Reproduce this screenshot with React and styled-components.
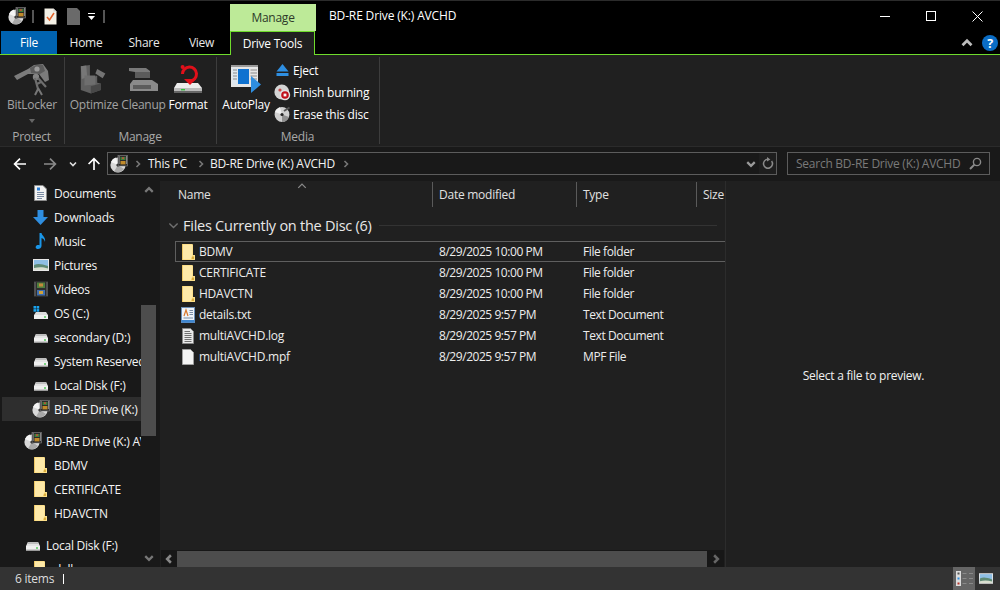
import React from "react";
import styled, { createGlobalStyle } from "styled-components";

const Global = createGlobalStyle`
  html, body { margin: 0; padding: 0; background: #000; }
  * { box-sizing: border-box; }
  body { font-family: "Open Sans", "Noto Sans", "Liberation Sans", sans-serif; font-size: 12px; color: #fff; }
`;

const Window = styled.div`
  width: 1000px; height: 590px; display: flex; flex-direction: column; overflow: hidden;
  background: #000; border-top: 1px solid #2b2b2b;
  letter-spacing: -0.25px;
`;
const TitleBar = styled.div`
  height: 30px; display: flex; align-items: flex-start; flex: none;
`;
const QuickAccess = styled.div`
  width: 230px; height: 30px; display: flex; align-items: center; padding: 0 0 0 8px; flex: none;
`;
const QuickSep = styled.span`
  width: 2px; height: 13px; background: #555; flex: none;
  margin: ${p => p.$margin};
`;
const QuickItem = styled.span`
  display: flex; flex: none; margin-left: ${p => p.$m || 0}px;
`;
const ContextTab = styled.div`
  width: 86px; height: 27px; margin-top: 3px; background: #bdea98; color: #2e3a2a;
  display: flex; align-items: center; justify-content: center; flex: none;
`;
const Title = styled.div`
  margin-left: 13px; line-height: 30px; flex: 1; letter-spacing: -0.15px;
`;
const WinButton = styled.div`
  width: 46px; height: 30px; display: flex; align-items: center; justify-content: center; flex: none;
`;
const TabRow = styled.div`
  height: 24px; display: flex; flex: none; border-bottom: 1px solid #6fdc2c; padding-left: 1px; align-items: stretch;
`;
const FileTab = styled.div`
  width: 56px; height: 23px; background: #0063b1; display: flex; align-items: center; justify-content: center; color: #fff; flex: none;
`;
const Tab = styled.div`
  width: ${p => p.$w}px; display: flex; align-items: center; justify-content: center; color: #e8e8e8; flex: none;
`;
const ActiveTab = styled.div`
  width: 85px; height: 24px; background: #202020; color: #fff; border: 1px solid #6fdc2c; border-bottom: 0;
  display: flex; align-items: center; justify-content: center; flex: none;
`;
const TabFiller = styled.div`flex: 1;`;
const TabTools = styled.div`
  display: flex; align-items: center; gap: 9px; padding-right: 2px; height: 23px;
`;
const Ribbon = styled.div`
  height: 92px; flex: none; background: #202020; display: flex; border-bottom: 1px solid #2b2b2b; padding-top: 2px;
`;
const Group = styled.div`
  width: ${p => p.$w}px; flex: none; display: flex; flex-direction: column; height: 87px;
  border-right: 1px solid #3d3d3d;
`;
const GroupBody = styled.div`
  height: 72px; display: flex; padding-left: ${p => p.$pad || 0}px; gap: ${p => p.$gap || 0}px;
`;
const GroupLabel = styled.div`
  height: 15px; margin-top: 1px; text-align: center; color: #a9a9a9; line-height: 15px; margin-right: 1px;
`;
const BigButton = styled.div`
  width: ${p => p.$w}px; display: flex; flex-direction: column; align-items: center; flex: none;
  color: ${p => p.$off ? "#a3a3a3" : "#fff"};
`;
const BigIcon = styled.div`
  height: 36px; margin-top: 4px; display: flex; align-items: center; justify-content: center;
`;
const BigLabel = styled.div`
  line-height: 16px; white-space: nowrap;
`;
const Drop = styled.div`
  width: 0; height: 0; border: 3.5px solid transparent; border-top: 4px solid #666; border-bottom: 0; margin-top: 6px;
`;
const SmallStack = styled.div`
  display: flex; flex-direction: column; padding-top: 2px; margin-left: 3px;
`;
const SmallButton = styled.div`
  height: 22px; display: flex; align-items: center; gap: 2px; white-space: nowrap;
`;
const SmallIcon = styled.span`
  width: 17px; height: 17px; display: flex; align-items: center; justify-content: center; flex: none;
`;
const AddressRow = styled.div`
  height: 34px; flex: none; background: #191919; display: flex; align-items: flex-start; padding-top: 5px;
`;
const NavButtons = styled.div`
  width: 107px; height: 23px; display: flex; align-items: center; flex: none; padding-left: 13px;
`;
const NavBtn = styled.span`
  display: flex; align-items: center; justify-content: center; width: ${p => p.$w}px; flex: none;
  margin-left: ${p => p.$m || 0}px;
`;
const AddressBox = styled.div`
  width: 670px; height: 23px; border: 1px solid #5c5c5c; display: flex; align-items: center; padding-left: 2px; flex: none;
`;
const Crumb = styled.span`
  color: #f2f2f2; white-space: nowrap; margin-left: ${p => p.$m}px;
`;
const CrumbSep = styled.span`
  display: flex; margin-left: ${p => p.$m}px;
`;
const BoxTools = styled.div`
  margin-left: auto; display: flex; align-items: center; height: 100%;
`;
const BoxTool = styled.span`
  width: ${p => p.$w}px; height: 100%; display: flex; align-items: center; justify-content: center;
  background: ${p => p.$dark ? "#1e1e1e" : "transparent"};
`;
const SearchBox = styled.div`
  width: 203px; height: 23px; margin-left: 10px; border: 1px solid #5c5c5c; color: #7a7a7a;
  display: flex; align-items: center; padding: 0 7px 0 8px; justify-content: space-between; flex: none;
`;
const Body = styled.div`
  flex: 1; min-height: 0; display: flex;
`;
const NavPane = styled.div`
  width: 160px; flex: none; background: #191919; display: flex; overflow: hidden;
`;
const NavList = styled.div`
  width: 141px; flex: none; padding: 0 0 0 2px; overflow: hidden;
`;
const NavRow = styled.div`
  height: 24px; width: 139px; display: flex; align-items: center; white-space: nowrap; overflow: hidden;
  padding-left: ${p => p.$root ? 21 : 29}px; gap: 4px; flex: none;
  margin-top: ${p => p.$gap ? 8 : 0}px; color: #f4f4f4;
  background: ${p => p.$sel ? "#2e2e2e" : "transparent"};
`;
const NavIcon = styled.span`
  width: 19px; height: 19px; flex: none; display: flex; align-items: center; justify-content: center;
`;
const NavScroll = styled.div`
  width: 15px; flex: none; display: flex; flex-direction: column; align-items: center; height: 100%;
`;
const ScrollArrow = styled.span`
  height: 18px; display: flex; align-items: center; justify-content: center; flex: none; margin-top: ${p => p.$m || 0}px;
`;
const ScrollThumb = styled.div`
  width: 15px; height: 131px; margin-top: 106px; background: #4d4d4d; flex: none;
`;
const ListPane = styled.div`
  width: 565px; flex: none; background: #202020; display: flex; flex-direction: column;
`;
const ColumnHead = styled.div`
  height: 26px; flex: none; display: flex; color: #e0e0e0; padding-top: 1px; position: relative;
`;
const SortMark = styled.span`
  position: absolute; left: 137px; top: 0; display: flex;
`;
const Column = styled.div`
  width: ${p => p.$w}px; flex: none; height: 25px; display: flex; align-items: center; white-space: nowrap; overflow: hidden;
  padding-left: ${p => p.$pad}px; border-right: ${p => p.$end ? "0" : "1px solid #5a5a5a"};
`;
const GroupHead = styled.div`
  height: 34px; flex: none; display: flex; align-items: center; padding: 2px 8px 0 8px; font-size: 14.5px; color: #e8e8e8; white-space: nowrap;
`;
const GroupChevron = styled.span`
  width: 15px; display: flex; flex: none;
`;
const GroupLine = styled.span`
  flex: 1; height: 1px; background: #333; margin-left: 7px;
`;
const Rows = styled.div`
  flex: 1; min-height: 0; display: flex; flex-direction: column;
`;
const FileRow = styled.div`
  height: 21px; width: 550px; margin-left: 15px; flex: none; display: flex; align-items: center; white-space: nowrap; color: #ededed;
  border: 1px solid ${p => p.$focus ? "#5f5f5f" : "transparent"}; border-right: 0;
`;
const FileIconBox = styled.span`
  width: 16px; height: 19px; margin-left: 4px; display: flex; align-items: center; justify-content: center; flex: none;
`;
const FileName = styled.span`width: 240px; margin-left: 3px; flex: none;`;
const FileDate = styled.span`width: 144px; flex: none; letter-spacing: -0.45px;`;
const FileType = styled.span`letter-spacing: -0.4px;`;
const HScroll = styled.div`
  height: 17px; flex: none; margin-left: 1px; background: #171717; display: flex; align-items: stretch; width: 563px;
`;
const HArrow = styled.span`
  width: ${p => p.$w}px; flex: none; display: flex; align-items: center; justify-content: center;
`;
const HThumb = styled.div`
  flex: 1; background: #4d4d4d; margin-top: 1px;
`;
const Preview = styled.div`
  flex: 1; background: #202020; border-left: 1px solid #2c2c2c; display: flex; align-items: center; justify-content: center; color: #f0f0f0;
`;
const PreviewText = styled.span`margin: 3px 0 0 1px;`;
const StatusBar = styled.div`
  height: 23px; flex: none; background: #333; display: flex; align-items: center; padding-left: 15px; color: #ddd;
`;
const Caret = styled.span`
  width: 1px; height: 10px; background: #fff; margin-left: 9px;
`;
const ViewButtons = styled.div`
  margin-left: auto; display: flex; height: 100%; align-items: center; padding-right: 3px;
`;
const ViewBtn = styled.span`
  width: 22px; height: 23px; display: flex; align-items: center; justify-content: center;
  background: ${p => p.$on ? "#656565" : "transparent"};
`;
const ArrowSvg = styled.svg`
  transform: rotate(${p => p.$rot || 0}deg);
`;

/* ---------- drawings ---------- */
const Disc = ({ s = 18 }) => (
  <svg width={s} height={s} viewBox="0 0 18 18">
    <circle cx="8" cy="10" r="7.6" fill="#d8d8d8" />
    <path d="M8 10 L1 7 A7.6 7.6 0 0 1 6 2.6Z" fill="#f5f5f5" />
    <path d="M8 10 L14 14 A7.6 7.6 0 0 1 4 16.4Z" fill="#a8a8a8" />
    <circle cx="8" cy="10" r="1.6" fill="#191919" />
    <rect x="8" y="0.5" width="9.5" height="10.5" fill="#2b2b2b" stroke="#8a8a8a" strokeWidth="0.6" />
    <rect x="10.5" y="2" width="5" height="3" fill="#3f7f3a" />
    <rect x="10.5" y="6" width="5" height="3.4" fill="#c08a2a" />
    <rect x="12" y="2.4" width="2" height="1.4" fill="#d24a3a" />
    <rect x="8.7" y="1.5" width="1" height="1" fill="#ddd" /><rect x="8.7" y="3.5" width="1" height="1" fill="#ddd" />
    <rect x="8.7" y="5.5" width="1" height="1" fill="#ddd" /><rect x="8.7" y="7.5" width="1" height="1" fill="#ddd" />
    <rect x="16" y="1.5" width="1" height="1" fill="#ddd" /><rect x="16" y="3.5" width="1" height="1" fill="#ddd" />
    <rect x="16" y="5.5" width="1" height="1" fill="#ddd" /><rect x="16" y="7.5" width="1" height="1" fill="#ddd" />
  </svg>
);
const Folder = () => (
  <svg width="13" height="16" viewBox="0 0 13 16">
    <path d="M0 0 H10.5 L11 1 V11 H13 V16 H0Z" fill="#fde08b" />
    <path d="M1 1 H10 V12 L9 15 H1Z" fill="#fee9a8" />
    <path d="M10 12.5 H12 V15 H9.5Z" fill="#d9ac3c" />
    <path d="M0 0 H1 V16 H0Z" fill="#eec765" />
  </svg>
);
const Drive = ({ s = 16 }) => (
  <svg width={s} height={s} viewBox="0 0 16 16">
    <path d="M3 5 H13 L15 9 H1Z" fill="#e4e4e4" />
    <path d="M3 5 H13 L14 7 H2Z" fill="#bdbdbd" />
    <rect x="1" y="9" width="14" height="4.6" fill="#f0f0f0" />
    <rect x="1" y="12.6" width="14" height="1" fill="#9a9a9a" />
    <rect x="11" y="10.4" width="2" height="1.2" fill="#31c23c" />
  </svg>
);
const OsDrive = () => (
  <svg width="16" height="16" viewBox="0 0 16 16">
    <path d="M3 7 H13 L15 10 H1Z" fill="#dcdcdc" />
    <rect x="1" y="10" width="14" height="4" fill="#f0f0f0" />
    <rect x="11" y="11.4" width="2" height="1.2" fill="#31c23c" />
    <rect x="0.5" y="1" width="2.6" height="2.6" fill="#19a3ee" /><rect x="3.6" y="1" width="2.6" height="2.6" fill="#19a3ee" />
    <rect x="0.5" y="4.1" width="2.6" height="2.6" fill="#19a3ee" /><rect x="3.6" y="4.1" width="2.6" height="2.6" fill="#19a3ee" />
  </svg>
);
const DocIcon = () => (
  <svg width="13" height="16" viewBox="0 0 13 16">
    <path d="M.5 .5 H9 L12.5 4 V15.5 H.5Z" fill="#f2f2f2" stroke="#8c8c8c" />
    <rect x="3" y="2.5" width="3" height="3" fill="#2b7fd6" />
    <path d="M3 7.5H10M3 9.5H10M3 11.5H10M3 13.5H8" stroke="#7a8ba3" />
  </svg>
);
const Download = () => (
  <svg width="17" height="17" viewBox="0 0 17 17">
    <path d="M5.5 1 H11.5 V8 H16 L8.5 16 L1 8 H5.5Z" fill="#2f8ee0" />
  </svg>
);
const Music = () => (
  <svg width="14" height="18" viewBox="0 0 14 18">
    <path d="M5.5 1 H7.5 C8 4 12 5 11 10 C10.5 7.5 9 6.5 7.5 6 V14 C7.5 16.5 4.5 17.5 2.8 16.8 C1 16 1.5 13.5 3.5 13 C4.3 12.8 5 12.9 5.5 13.2Z" fill="#1a96e8" />
  </svg>
);
const Picture = ({ w = 16, h = 12 }) => (
  <svg width={w} height={h} viewBox="0 0 16 12">
    <rect width="16" height="12" fill="#e8e8e8" />
    <rect x="1" y="1" width="14" height="10" fill="#8fbfe4" />
    <path d="M1 6 C5 4 9 5 15 7 V11 H1Z" fill="#5f8a74" />
    <path d="M1 9 C6 8 10 8 15 9.5 V11 H1Z" fill="#d9dfd0" />
  </svg>
);
const Film = () => (
  <svg width="14" height="16" viewBox="0 0 14 16">
    <rect width="14" height="16" fill="#2e2e2e" />
    <rect x="3" y="1.5" width="8" height="5.5" fill="#4f7f3f" />
    <rect x="3" y="9" width="8" height="5.5" fill="#3f6fb0" />
    <rect x="5" y="2.5" width="4" height="3" fill="#c58a3a" />
    <rect x="5" y="10" width="4" height="3" fill="#d0a23a" />
    <path d="M1 1.5V14.5M13 1.5V14.5" stroke="#bbb" strokeDasharray="1 1" />
  </svg>
);
const TextDoc = () => (
  <svg width="14" height="16" viewBox="0 0 14 16">
    <rect x=".5" y=".5" width="13" height="15" fill="#eef3f9" stroke="#6c8fb8" />
    <rect x=".5" y="13" width="13" height="2.5" fill="#3f86cf" />
    <path d="M3 9 L5 3 L7 9" fill="none" stroke="#d9772c" strokeWidth="1.2" />
    <path d="M8.5 3.5H12M8.5 5.5H12M8.5 7.5H12M2.5 11H12" stroke="#7a8ba3" />
  </svg>
);
const LogIcon = () => (
  <svg width="12" height="16" viewBox="0 0 12 16">
    <path d="M.5 .5 H8.5 L11.5 3.5 V15.5 H.5Z" fill="#e9e9e9" stroke="#888" />
    <path d="M2.5 3.5H8M2.5 5.5H9.5M2.5 7.5H9.5M2.5 9.5H9.5M2.5 11.5H9.5M2.5 13.5H9.5" stroke="#6f6f6f" />
  </svg>
);
const BlankDoc = () => (
  <svg width="12" height="16" viewBox="0 0 12 16">
    <path d="M.5 .5 H8.5 L11.5 3.5 V15.5 H.5Z" fill="#f4f4f4" stroke="#a0a0a0" />
  </svg>
);
const Chev = ({ d = "right", c = "#8a8a8a", s = 8, w = 1.6 }) => {
  const p = { right: "M2.5 1 L5.5 4 L2.5 7", left: "M5.5 1 L2.5 4 L5.5 7", up: "M1 5.5 L4 2.5 L7 5.5", down: "M1 2.5 L4 5.5 L7 2.5" }[d];
  return <svg width={s} height={s} viewBox="0 0 8 8"><path d={p} fill="none" stroke={c} strokeWidth={w} /></svg>;
};
const Arrow = ({ c = "#fff", rot = 0 }) => (
  <ArrowSvg width="14" height="14" viewBox="0 0 14 14" $rot={rot}>
    <path d="M13 7 H2 M7 1.6 L1.6 7 L7 12.4" fill="none" stroke={c} strokeWidth="1.7" />
  </ArrowSvg>
);
const Refresh = () => (
  <svg width="12" height="13" viewBox="0 0 12 13">
    <path d="M9.6 4 A4.5 4.5 0 1 1 6 2.2" fill="none" stroke="#8a8a8a" strokeWidth="1.5" />
    <path d="M5 0 L8.4 2.4 L5 4.6Z" fill="#8a8a8a" />
  </svg>
);
const Search = () => (
  <svg width="13" height="13" viewBox="0 0 13 13">
    <circle cx="8" cy="5" r="3.6" fill="none" stroke="#8a8a8a" strokeWidth="1.4" />
    <path d="M5.4 7.6 L1 12" stroke="#8a8a8a" strokeWidth="2" />
  </svg>
);
const BitLockerIcon = () => (
  <svg width="36" height="33" viewBox="0 0 36 33">
    <path d="M0 13 L14 6 L20 2 L29 1 L34 8 L35 17 L31 19 L25 11 L14 11 L3 17Z" fill="#7c7c7c" />
    <path d="M16 5 L22 2 L29 2 L31 8 L26 11 L17 10Z" fill="#5c5c5c" />
    <circle cx="23" cy="6" r="2.6" fill="#9c9c9c" />
    <circle cx="22" cy="14" r="3.2" fill="#858585" />
    <path d="M21 15 L24 26 M24 15 L32 24 M23 21 L27 19" stroke="#6e6e6e" strokeWidth="2.2" fill="none" />
    <path d="M24 25 L28 32 M24 26 L21 32" stroke="#777" strokeWidth="2" />
  </svg>
);
const OptimizeIcon = () => (
  <svg width="30" height="33" viewBox="0 0 33 33">
    <path d="M2 2 L12 0.5 V16 L20 12 V20 L24 21 V28 L13 32 L2 28Z" fill="#5f5f5f" />
    <path d="M2 2 L8 1 L9 14 L3 16Z" fill="#777" />
    <path d="M6 12 L18 12 V22 L6 23Z" fill="#6e6e6e" />
    <path d="M13 32 L24 28 V21 L13 24Z" fill="#484848" />
    <path d="M20 5 L29 10 L26 15 L18 10Z" fill="#747474" />
  </svg>
);
const CleanupIcon = () => (
  <svg width="30" height="26" viewBox="0 0 30 26">
    <path d="M0 2 H17 L21 5 V11 H6 V6 L0 5Z" fill="#7a7a7a" />
    <path d="M6 6 H21 V12 H6Z" fill="#5b5b5b" />
    <path d="M4 14 H23 L29 18 V25 H1 V18Z" fill="#8a8a8a" />
    <rect x="4" y="19" width="18" height="4" fill="#5c5c5c" />
  </svg>
);
const FormatIcon = () => (
  <svg width="30" height="32" viewBox="0 0 30 32">
    <path d="M4 20 H25 L29 25 V30 H1 V25Z" fill="#ececec" />
    <path d="M1 25 H29 V30 H1Z" fill="#bbb" />
    <path d="M1 28 H29 V30 H1Z" fill="#666" />
    <rect x="8" y="26" width="4" height="1.4" fill="#31c23c" />
    <path d="M17 18 A7 7 0 1 0 9.5 11" fill="none" stroke="#e0101a" strokeWidth="3" />
    <circle cx="9.6" cy="4" r="2" fill="#e0101a" />
    <path d="M11 16 H23 L17 22Z" fill="#e0101a" />
  </svg>
);
const AutoPlayIcon = () => (
  <svg width="32" height="30" viewBox="0 0 32 30">
    <rect x="1" y="1" width="27" height="22" fill="#e6e6e6" />
    <rect x="1" y="1" width="27" height="2" fill="#9a9a9a" />
    <rect x="2" y="4" width="6" height="17" fill="#dfe7ee" />
    <rect x="8" y="5" width="11" height="15" fill="#0f72d0" />
    <path d="M3 6H7M3 9H7M3 12H7M3 15H7M20.5 6H27M20.5 9H27M20.5 12H27M20.5 15H27" stroke="#8b8b8b" />
    <path d="M21 12 L31 20.5 L21 29Z" fill="#2e8ee0" />
  </svg>
);
const EjectIcon = () => (
  <svg width="13" height="12" viewBox="0 0 13 12">
    <path d="M6.5 0 L12.5 7.4 H.5Z" fill="#2e8fe2" /><rect x=".5" y="9" width="12" height="3" fill="#2e8fe2" />
  </svg>
);
const BurnIcon = () => (
  <svg width="17" height="17" viewBox="0 0 17 17">
    <circle cx="7.8" cy="8" r="7.4" fill="#d4d4d4" />
    <circle cx="6" cy="6" r="1.6" fill="#c94a4a" />
    <circle cx="11" cy="11" r="5.2" fill="#e3e3e3" />
    <circle cx="11" cy="11" r="3.8" fill="#c00f1a" />
    <rect x="9.6" y="9.6" width="2.8" height="2.8" fill="#f7f7f7" />
  </svg>
);
const EraseIcon = () => (
  <svg width="17" height="17" viewBox="0 0 17 17">
    <circle cx="8" cy="8.5" r="7.4" fill="#cfcfcf" />
    <path d="M8 8.5 L1 6 A7.4 7.4 0 0 1 6 1.3Z" fill="#f0f0f0" />
    <path d="M8 8.5 L15 11 A7.4 7.4 0 0 1 8 16Z" fill="#8f8f8f" />
    <circle cx="8" cy="8.5" r="1.6" fill="#222" />
    <path d="M10 5 L15.5 1.5" stroke="#555" strokeWidth="2" />
  </svg>
);
const NotesIcon = () => (
  <svg width="13" height="17" viewBox="0 0 13 17">
    <path d="M.5 .5 H9.5 L12.5 3.5 V16.5 H.5Z" fill="#f3f0e6" />
    <path d="M9.5 .5 V3.5 H12.5Z" fill="#cfcfcf" />
    <path d="M3 9 L5.5 12 L10 5" fill="none" stroke="#e2622a" strokeWidth="1.5" />
  </svg>
);
const GreyDoc = () => (
  <svg width="13" height="17" viewBox="0 0 13 17">
    <path d="M0 0 H10 L13 3 V17 H0Z" fill="#6a6a6a" />
  </svg>
);
const QatDrop = () => (
  <svg width="7" height="7" viewBox="0 0 7 7">
    <rect y="0" width="7" height="1" fill="#fff" /><path d="M0 3 H7 L3.5 7Z" fill="#fff" />
  </svg>
);
const DetailsView = () => (
  <svg width="17" height="15" viewBox="0 0 17 15">
    <rect x="0" y="0" width="5" height="15" fill="#ddd" />
    <rect x="1.5" y="1.5" width="2" height="2" fill="#555" />
    <rect x="1.5" y="6.5" width="2" height="2" fill="#2e8ee0" />
    <rect x="1.5" y="11.5" width="2" height="2" fill="#b8342a" />
    <path d="M6.5 2.5H10.5M13 2.5H17M6.5 7.5H10.5M13 7.5H17M6.5 12.5H10.5M13 12.5H17" stroke="#8a8a8a" />
  </svg>
);

const navItems = [
  { t: "Documents", i: <DocIcon /> },
  { t: "Downloads", i: <Download /> },
  { t: "Music", i: <Music /> },
  { t: "Pictures", i: <Picture /> },
  { t: "Videos", i: <Film /> },
  { t: "OS (C:)", i: <OsDrive /> },
  { t: "secondary (D:)", i: <Drive /> },
  { t: "System Reserved (E:)", i: <Drive /> },
  { t: "Local Disk (F:)", i: <Drive /> },
  { t: "BD-RE Drive (K:)", i: <Disc />, sel: true },
  { t: "BD-RE Drive (K:) AVCHD", i: <Disc />, root: true, gap: true },
  { t: "BDMV", i: <Folder /> },
  { t: "CERTIFICATE", i: <Folder /> },
  { t: "HDAVCTN", i: <Folder /> },
  { t: "Local Disk (F:)", i: <Drive />, root: true, gap: true },
  { t: "dell", i: <Folder /> },
];

const files = [
  { n: "BDMV", d: "8/29/2025 10:00 PM", t: "File folder", i: <Folder />, focus: true },
  { n: "CERTIFICATE", d: "8/29/2025 10:00 PM", t: "File folder", i: <Folder /> },
  { n: "HDAVCTN", d: "8/29/2025 10:00 PM", t: "File folder", i: <Folder /> },
  { n: "details.txt", d: "8/29/2025 9:57 PM", t: "Text Document", i: <TextDoc /> },
  { n: "multiAVCHD.log", d: "8/29/2025 9:57 PM", t: "Text Document", i: <LogIcon /> },
  { n: "multiAVCHD.mpf", d: "8/29/2025 9:57 PM", t: "MPF File", i: <BlankDoc /> },
];

export default function App() {
  return (
    <Window>
      <Global />
      <TitleBar>
        <QuickAccess>
          <Disc />
          <QuickSep $margin="0 10px 0 6px" />
          <NotesIcon />
          <QuickItem $m={10}><GreyDoc /></QuickItem>
          <QuickItem $m={8}><QatDrop /></QuickItem>
          <QuickSep $margin="0 0 0 8px" />
        </QuickAccess>
        <ContextTab>Manage</ContextTab>
        <Title>BD-RE Drive (K:) AVCHD</Title>
        <WinButton>
          <svg width="10" height="10" viewBox="0 0 10 10"><path d="M0 5.5H10" stroke="#fff" /></svg>
        </WinButton>
        <WinButton>
          <svg width="10" height="10" viewBox="0 0 10 10"><rect x=".5" y=".5" width="9" height="9" fill="none" stroke="#fff" /></svg>
        </WinButton>
        <WinButton>
          <svg width="11" height="11" viewBox="0 0 11 11"><path d="M.5 .5L10.5 10.5M10.5 .5L.5 10.5" stroke="#fff" /></svg>
        </WinButton>
      </TitleBar>
      <TabRow>
        <FileTab>File</FileTab>
        <Tab $w={58}>Home</Tab>
        <Tab $w={58}>Share</Tab>
        <Tab $w={57}>View</Tab>
        <ActiveTab>Drive Tools</ActiveTab>
        <TabFiller />
        <TabTools>
          <Chev d="up" c="#bdbdbd" s={12} w={1.8} />
          <svg width="16" height="16" viewBox="0 0 16 16">
            <circle cx="8" cy="8" r="8" fill="#0a6cc4" />
            <text x="8" y="12.5" textAnchor="middle" fontSize="12.5" fontWeight="700" fill="#fff" fontFamily="Open Sans">?</text>
          </svg>
        </TabTools>
      </TabRow>
      <Ribbon>
        <Group $w={65}>
          <GroupBody $pad={8}>
            <BigButton $w={48} $off>
              <BigIcon><BitLockerIcon /></BigIcon>
              <BigLabel>BitLocker</BigLabel>
              <Drop />
            </BigButton>
          </GroupBody>
          <GroupLabel>Protect</GroupLabel>
        </Group>
        <Group $w={152}>
          <GroupBody $pad={6} $gap={5}>
            <BigButton $w={46} $off>
              <BigIcon><OptimizeIcon /></BigIcon>
              <BigLabel>Optimize</BigLabel>
            </BigButton>
            <BigButton $w={43} $off>
              <BigIcon><CleanupIcon /></BigIcon>
              <BigLabel>Cleanup</BigLabel>
            </BigButton>
            <BigButton $w={36}>
              <BigIcon><FormatIcon /></BigIcon>
              <BigLabel>Format</BigLabel>
            </BigButton>
          </GroupBody>
          <GroupLabel>Manage</GroupLabel>
        </Group>
        <Group $w={163}>
          <GroupBody $pad={4}>
            <BigButton $w={50}>
              <BigIcon><AutoPlayIcon /></BigIcon>
              <BigLabel>AutoPlay</BigLabel>
            </BigButton>
            <SmallStack>
              <SmallButton><SmallIcon><EjectIcon /></SmallIcon>Eject</SmallButton>
              <SmallButton><SmallIcon><BurnIcon /></SmallIcon>Finish burning</SmallButton>
              <SmallButton><SmallIcon><EraseIcon /></SmallIcon>Erase this disc</SmallButton>
            </SmallStack>
          </GroupBody>
          <GroupLabel>Media</GroupLabel>
        </Group>
      </Ribbon>
      <AddressRow>
        <NavButtons>
          <NavBtn $w={14}><Arrow /></NavBtn>
          <NavBtn $w={16} $m={15}><Arrow c="#8a8a8a" rot={180} /></NavBtn>
          <NavBtn $w={10} $m={10}><Chev d="down" c="#e0e0e0" s={8} /></NavBtn>
          <NavBtn $w={14} $m={9}><Arrow rot={90} /></NavBtn>
        </NavButtons>
        <AddressBox>
          <Disc />
          <CrumbSep $m={6}><Chev c="#777" /></CrumbSep>
          <Crumb $m={6}>This PC</Crumb>
          <CrumbSep $m={10}><Chev c="#777" /></CrumbSep>
          <Crumb $m={5}>BD-RE Drive (K:) AVCHD</Crumb>
          <CrumbSep $m={7}><Chev c="#777" /></CrumbSep>
          <BoxTools>
            <BoxTool $w={16}><Chev d="down" c="#9a9a9a" s={10} w={1.8} /></BoxTool>
            <BoxTool $w={17} $dark><Refresh /></BoxTool>
          </BoxTools>
        </AddressBox>
        <SearchBox>
          <span>Search BD-RE Drive (K:) AVCHD</span>
          <Search />
        </SearchBox>
      </AddressRow>
      <Body>
        <NavPane>
          <NavList>
            {navItems.map((it, i) => (
              <NavRow key={i} $root={it.root} $gap={it.gap} $sel={it.sel}>
                <NavIcon>{it.i}</NavIcon>
                <span>{it.t}</span>
              </NavRow>
            ))}
          </NavList>
          <NavScroll>
            <ScrollArrow><Chev d="up" c="#777" s={10} w={1.8} /></ScrollArrow>
            <ScrollThumb />
            <ScrollArrow $m={113}><Chev d="down" c="#777" s={10} w={1.8} /></ScrollArrow>
          </NavScroll>
        </NavPane>
        <ListPane>
          <ColumnHead>
            <SortMark><Chev d="up" c="#8a8a8a" s={10} w={1} /></SortMark>
            <Column $w={273} $pad={18}>Name</Column>
            <Column $w={144} $pad={6}>Date modified</Column>
            <Column $w={120} $pad={6}>Type</Column>
            <Column $w={28} $pad={6} $end>Size</Column>
          </ColumnHead>
          <GroupHead>
            <GroupChevron><Chev d="down" c="#6f6f6f" s={11} w={1} /></GroupChevron>
            Files Currently on the Disc (6)
            <GroupLine />
          </GroupHead>
          <Rows>
            {files.map((f) => (
              <FileRow key={f.n} $focus={f.focus}>
                <FileIconBox>{f.i}</FileIconBox>
                <FileName>{f.n}</FileName>
                <FileDate>{f.d}</FileDate>
                <FileType>{f.t}</FileType>
              </FileRow>
            ))}
          </Rows>
          <HScroll>
            <HArrow $w={16}><Chev d="left" c="#888" s={10} w={2} /></HArrow>
            <HThumb />
            <HArrow $w={17}><Chev c="#666" s={10} w={2} /></HArrow>
          </HScroll>
        </ListPane>
        <Preview><PreviewText>Select a file to preview.</PreviewText></Preview>
      </Body>
      <StatusBar>
        6 items
        <Caret />
        <ViewButtons>
          <ViewBtn $on><DetailsView /></ViewBtn>
          <ViewBtn><Picture w={14} h={11} /></ViewBtn>
        </ViewButtons>
      </StatusBar>
    </Window>
  );
}
